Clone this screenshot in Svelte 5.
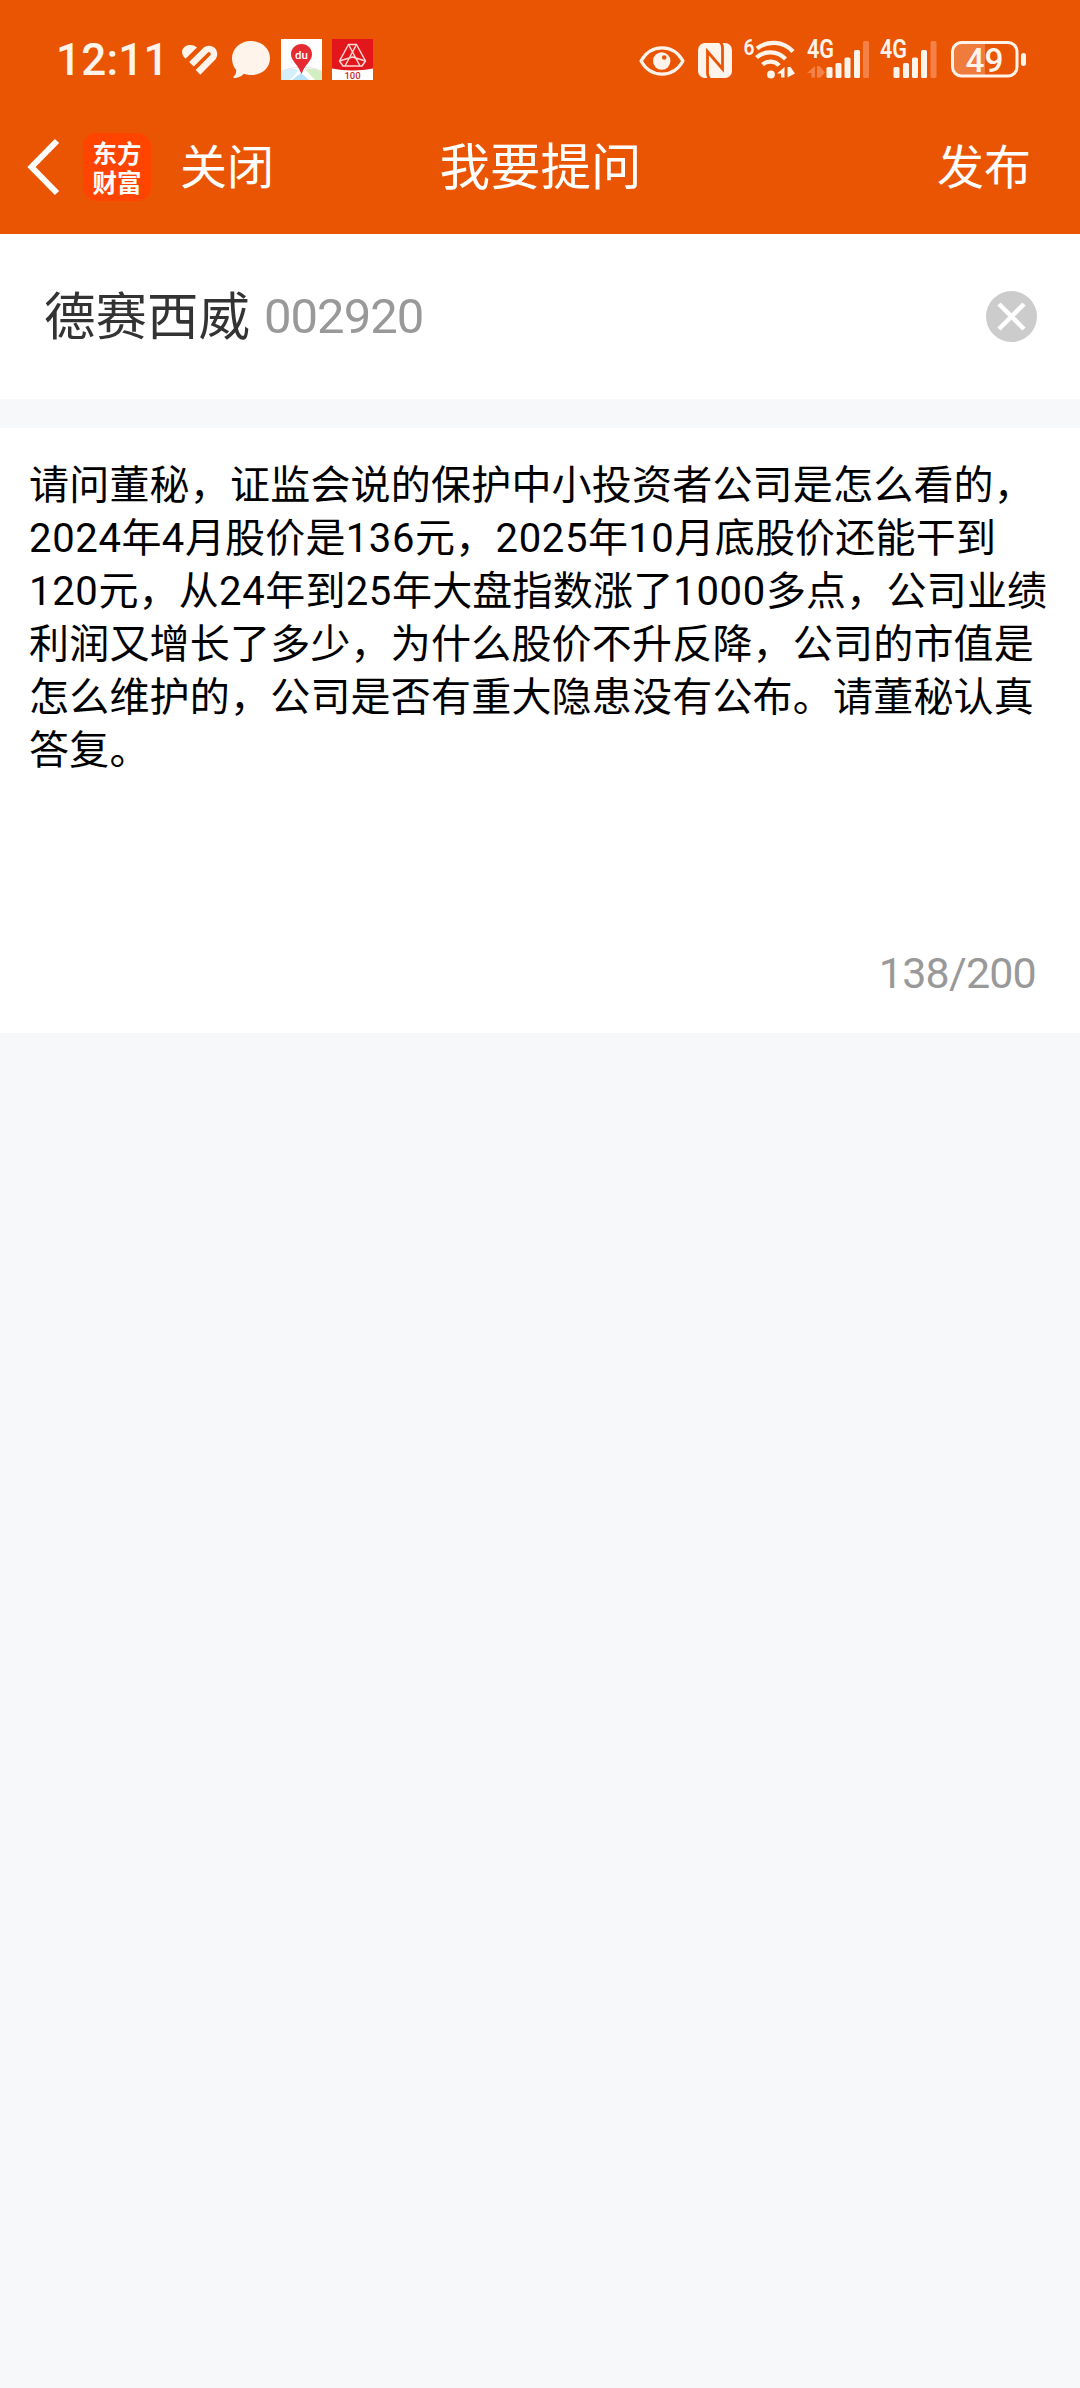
<script>

const stock = {
    name: '德赛西威',
    code: '002920'
}

const maxLength = 200
let count = 138

const lines = [
    '请问董秘，证监会说的保护中小投资者公司是怎么看的，',
    '2024年4月股价是136元，2025年10月底股价还能干到',
    '120元，从24年到25年大盘指数涨了1000多点，公司业绩',
    '利润又增长了多少，为什么股价不升反降，公司的市值是',
    '怎么维护的，公司是否有重大隐患没有公布。请董秘认真',
    '答复。'
]

</script>

<div class="page" lang="zh-CN">
    <header>
        <div class="status">
            <span class="time">12:11</span>
            <svg class="heart" width="36" height="42" viewBox="0 0 36 42">
                <path fill="#fff4ec" d="M3.500 19.800C-.6 16 -1.200 11 2.500 8C6 5.200 11.500 5.500 15 8.500Z" />
                <path d="M9.400 25.300L23.900 10.900A5.150 5.150 0 0 1 31.100 18.100L16 33.400" fill="none" stroke="#fff4ec" stroke-width="6.500" />
            </svg>
            <svg class="bubble" width="40" height="42" viewBox="0 0 40 42">
                <path fill="#fff4ec" d="M20 2C30.800 2 39 9.500 39 19.200C39 29 30.800 36 20 36C17.500 36 15 35.600 12.800 34.800C10.500 37.500 7 39.200 3.200 38.900C2 38.800 2.200 37.800 2.800 37.300C4.600 35.700 5.300 33.500 5.100 30.800C2.500 27.800 1 23.800 1 19.200C1 9.500 9.200 2 20 2Z" />
            </svg>
            <svg class="app" width="41" height="42" viewBox="0 0 41 42">
                <path fill="#fff" d="M0 0H41V41H0Z" />
                <path fill="#d5f0fb" d="M0 32L9 29L18 31L9 41H0Z" />
                <path fill="#b7e3f8" d="M20 34L28 41H11Z" />
                <path fill="#d3eec2" d="M24 30L34 29L41 32V41H34Z" />
                <path d="M0 32L13 28.500H29L41 32" fill="none" stroke="#e9e9ea" />
                <path fill="#e62a32" d="M20.500 5C26.500 5 31 9.500 31 15.200C31 22 24 25 20.800 34.500H20.200C17 25 10 22 10 15.200C10 9.500 14.500 5 20.500 5Z" />
                <text x="20.500" y="19.500" text-anchor="middle" font-size="11.500" font-weight="500" fill="#fff">du</text>
            </svg>
            <svg class="app" width="41" height="42" viewBox="0 0 41 42">
                <path fill="#e3161b" d="M0 0H41V41H0Z" />
                <path fill="#fff" d="M0 29.500C12 32 29 32 41 29.500V41H0Z" />
                <g fill="none" stroke="#ffd9d6" stroke-width="1.500" stroke-linejoin="round">
                    <path d="M16.500 5.500H24.500L33.500 22L30 27H11L7.500 22Z" />
                    <path d="M16.500 5.500L28 27M24.500 5.500L13 27M7.500 22L20.500 18L33.500 22" />
                </g>
                <text x="20.500" y="39.500" text-anchor="middle" font-size="9.500" font-weight="500" fill="#c9302c">100</text>
            </svg>

            <svg class="eye" width="46" height="42" viewBox="0 0 46 42">
                <path d="M2 22C12 4.500 34 4.500 44 22C34 39.500 12 39.500 2 22Z" fill="none" stroke="#fff4ec" stroke-width="3.200" stroke-linejoin="round" />
                <circle cx="22.700" cy="22" r="8.700" fill="#fff4ec" />
                <circle cx="25.200" cy="18.500" r="2.300" fill="#ea5504" />
            </svg>
            <svg class="nfc" width="34" height="42" viewBox="0 0 34 42">
                <rect y="4" width="34" height="35" rx="7" fill="#fff4ec" />
                <path d="M12 40C10 38.500 9.500 36.500 9.500 34V12.500L24.500 30V9C24.500 6.500 24 4.500 22 3" fill="none" stroke="#ea5504" stroke-width="2.800" />
            </svg>
            <svg class="wifi" width="52" height="42" viewBox="0 0 52 42">
                <text x="-.5" y="16" font-size="22" font-weight="600" fill="#fff4ec" textLength="11" lengthAdjust="spacingAndGlyphs">6</text>
                <g fill="none" stroke="#fff4ec" stroke-width="4.200">
                    <path d="M13 9.500C23 1.500 39 1.500 49 12.500" />
                    <path d="M12.500 18.500C20 11.500 33.500 11.500 41.500 20" />
                    <path d="M18.500 25.500C23 21.500 31 21.500 35 26.500" />
                </g>
                <circle cx="27" cy="35.500" r="3.900" fill="#fff4ec" />
                <path fill="#fff4ec" d="M40.500 28V38.500H37V34.500H33Z" />
                <path fill="#fff4ec" d="M43.500 28H46.500L51 34.500L43.500 38.500Z" />
            </svg>
            <svg class="signal" width="62" height="42" viewBox="0 0 62 42">
                <text x="0" y="19" font-size="25" font-weight="600" fill="#fff4ec" textLength="27" lengthAdjust="spacingAndGlyphs">4G</text>
                <path fill="#f48148" d="M8 27V38.500H4.500V34H0ZM10 27H12.500L18 33.500L13.500 38.500H10Z" />
                <g fill="#fff4ec">
                    <rect x="19.500" y="28" width="6" height="11" rx="1.500" />
                    <rect x="28.500" y="24" width="6" height="15" rx="1.500" />
                    <rect x="37.500" y="18.500" width="6" height="20.500" rx="1.500" />
                    <rect x="47" y="11" width="6" height="28" rx="1.500" />
                </g>
                <rect x="56" y="2" width="6" height="37" rx="1.500" fill="#f48148" />
            </svg>
            <svg class="signal" width="57" height="42" viewBox="0 0 57 42">
                <text x="0" y="19" font-size="25" font-weight="600" fill="#fff4ec" textLength="27" lengthAdjust="spacingAndGlyphs">4G</text>
                <g fill="#fff4ec">
                    <rect x="13.500" y="28" width="6" height="11" rx="1.500" />
                    <rect x="23" y="24" width="6" height="15" rx="1.500" />
                    <rect x="32" y="18.500" width="6" height="20.500" rx="1.500" />
                    <rect x="41" y="11" width="6" height="28" rx="1.500" />
                </g>
                <rect x="50.500" y="2" width="6" height="37" rx="1.500" fill="#f48148" />
            </svg>
            <svg class="battery" width="75" height="42" viewBox="0 0 75 42">
                <path fill="#ef7b3c" d="M10 3H34V37H10Q2 37 2 29V11Q2 3 10 3Z" />
                <rect x="1.500" y="3.500" width="64.500" height="33.500" rx="9" fill="none" stroke="#fff4ec" stroke-width="3" />
                <rect x="70" y="14" width="5" height="13" rx="2.500" fill="#fff4ec" />
                <text x="14.500" y="32.500" font-size="34" font-weight="500" fill="#fff4ec" textLength="38" lengthAdjust="spacingAndGlyphs">49</text>
            </svg>
        </div>

        <nav>
            <div class="left">
                <svg width="34" height="58" viewBox="0 0 34 58">
                    <path d="M31 3L5.500 29L31 55" fill="none" stroke="#fff" stroke-width="6" />
                </svg>
                <div class="logo">
                    <span>东方</span>
                    <span>财富</span>
                </div>
                <span class="close">关闭</span>
            </div>
            <h1>我要提问</h1>
            <span class="publish">发布</span>
        </nav>
    </header>

    <section class="stock">
        <span class="name">{ stock.name }</span>
        <span class="code">{ stock.code }</span>
        <svg width="51" height="51" viewBox="0 0 51 51">
            <circle cx="25.500" cy="25.500" r="25.500" fill="#ccc" />
            <path d="M13 13L38 38M38 13L13 38" stroke="#fff" stroke-width="4.500" />
        </svg>
    </section>

    <section class="question">
        <div class="text">
            {#each lines as line}
                <div>
                    {#each line.split(/(\d+)/) as part}
                        <span class:digits={ /\d/.test(part) }>{ part }</span>
                    {/each}
                </div>
            {/each}
        </div>
        <div class="count">{ count }/{ maxLength }</div>
    </section>
</div>

<style>

:global(body) {
    background-color: #f7f8fa;
}

.page {
    width: 1080px;
    min-height: 2388px;
    background-color: #f7f8fa;
    font-family: Roboto, "Noto Sans CJK SC", sans-serif;
}

svg {
    display: block;
    flex: none;
    overflow: visible;
}

header {
    height: 234px;
    background-color: #ea5504;
    color: #fff;
}

.status {
    display: flex;
    align-items: center;
    box-sizing: border-box;
    height: 100px;
    padding: 20px 54px 0 56px;
}

.time {
    width: 126px;
    font-size: 44px;
    line-height: 44px;
    font-weight: 500;
    letter-spacing: .2px;
    color: #fff4ec;
}

.bubble {
    margin-left: 13px;
}

.app {
    margin-left: 10px;
}

.eye {
    margin-left: auto;
}

.nfc {
    margin-left: 13px;
}

.wifi {
    margin-left: 12px;
}

.signal {
    margin-left: 11px;
}

.battery {
    margin-left: 14px;
}

nav {
    display: grid;
    grid-template-columns: 1fr auto 1fr;
    align-items: center;
    box-sizing: border-box;
    height: 134px;
    padding: 0 49px 0 26px;
}

.left {
    display: flex;
    align-items: center;
}

.logo {
    display: flex;
    flex-direction: column;
    align-items: center;
    justify-content: center;
    width: 68px;
    height: 68px;
    margin-left: 23px;
    border-radius: 14px;
    background-color: #ff4400;
    font-family: "Noto Sans CJK SC", sans-serif;
    font-size: 24.500px;
    line-height: 29px;
    font-weight: 700;
}

.close, .publish {
    padding-top: 2px;
    font-size: 47px;
    line-height: 60px;
}

.close {
    margin-left: 29px;
}

h1 {
    margin: 0;
    padding: 2px 0 0 24px;
    font-size: 50.5px;
    line-height: 60px;
    font-weight: 400;
}

.publish {
    text-align: right;
}

.stock {
    display: flex;
    align-items: center;
    box-sizing: border-box;
    height: 165px;
    padding: 0 43px 0 44px;
    background-color: #fff;
}

.name {
    padding-bottom: 8px;
    font-size: 51.5px;
    color: #333;
}

.code {
    margin-left: 14px;
    font-size: 49px;
    letter-spacing: -1px;
    color: #999;
}

.stock svg {
    margin-left: auto;
}

.question {
    display: flex;
    flex-direction: column;
    justify-content: space-between;
    box-sizing: border-box;
    height: 605px;
    margin-top: 29px;
    padding: 31px 44px 35px 29px;
    background-color: #fff;
}

.text {
    font-size: 40px;
    line-height: 53px;
    letter-spacing: .2px;
    color: #000;
}

.text div {
    display: flex;
    white-space: nowrap;
}

.digits {
    letter-spacing: .65px;
}

.count {
    align-self: flex-end;
    font-size: 43px;
    line-height: 50px;
    letter-spacing: -.8px;
    color: #999;
}

</style>
